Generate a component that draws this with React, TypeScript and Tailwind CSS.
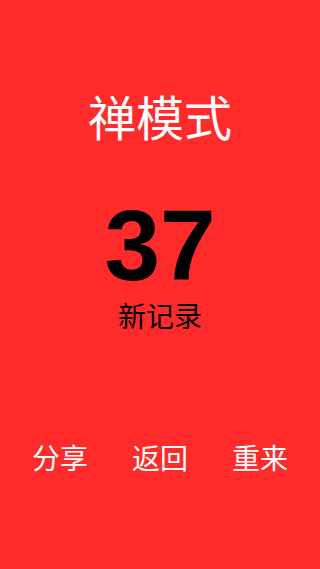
export default function App() {
  return (
    <div
      className="w-[320px] h-[569px] bg-[#ff2a2a] flex flex-col items-center pt-[91px]"
      style={{ fontFamily: '"Noto Sans CJK SC", "Noto Sans", sans-serif' }}
    >
      <div className="text-white text-[48px] leading-none">禅模式</div>
      <div
        className="mt-[56px] text-black text-[100px] leading-none font-bold"
        style={{ fontFamily: '"Liberation Sans", Arial, sans-serif' }}
      >
        37
      </div>
      <div className="mt-[6px] text-black text-[28px] leading-none">新记录</div>
      <div className="mt-[114px] flex justify-center gap-[44px] text-white text-[28px] leading-none">
        <span>分享</span>
        <span>返回</span>
        <span>重来</span>
      </div>
    </div>
  );
}
